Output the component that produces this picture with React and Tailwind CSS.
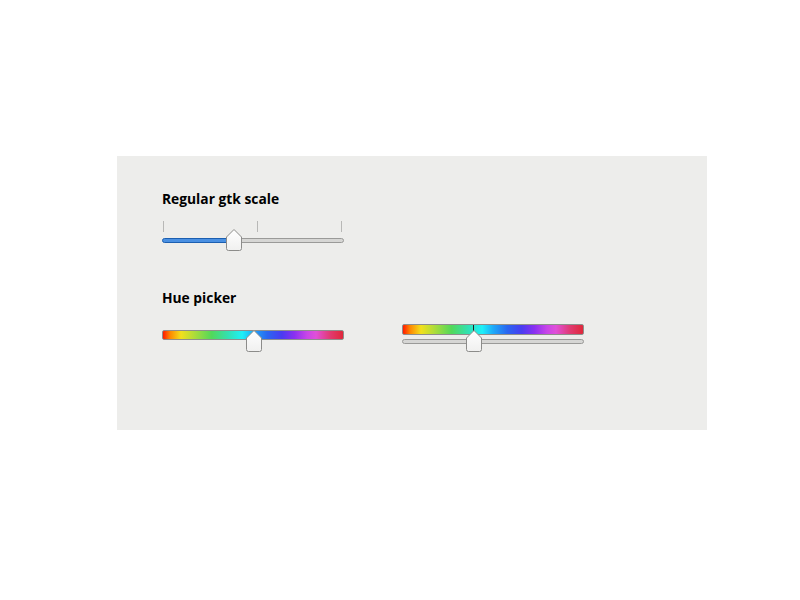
const hue =
  "bg-[linear-gradient(to_right,#ff1a00,#ff8800_4%,#f2e01c_10%,#a8dc3c_18%,#52d85a_27%,#33e0b0_36%,#1ef0f8_44%,#1eaaf8_50%,#2a66f0_58%,#4a3cf0_66%,#8a30f0_73%,#c846e8_80%,#e050d8_85%,#e03a70_93%,#e0283a)]";

function Knob() {
  return (
    <svg width="16" height="22" viewBox="0 0 16 22">
      <defs>
        <linearGradient id="kg" x1="0" y1="0" x2="0" y2="1">
          <stop offset="0" stopColor="#ffffff" />
          <stop offset="1" stopColor="#f0f0ef" />
        </linearGradient>
      </defs>
      <path
        d="M8 0.5 L15.5 8 L15.5 19.5 Q15.5 21.5 13.5 21.5 L2.5 21.5 Q0.5 21.5 0.5 19.5 L0.5 8 Z"
        fill="url(#kg)"
        stroke="#8c8c8a"
      />
    </svg>
  );
}

export default function App() {
  return (
    <div className="w-[800px] h-[600px] bg-white pt-[156px] pl-[117px] font-['Open_Sans',sans-serif]">
      <div className="w-[590px] h-[274px] bg-[#ededeb] pl-[45px] pt-[35px]">
        <h2 className="text-[13.8px] font-bold text-black leading-[16px]">Regular gtk scale</h2>

        {/* regular scale */}
        <div className="w-[182px] mt-[14px]">
          <div className="flex h-[11px] pl-[1px]">
            <div className="w-px h-full bg-[#b8b8b6]" />
            <div className="w-px h-full bg-[#b8b8b6] ml-[93px]" />
            <div className="w-px h-full bg-[#b8b8b6] ml-[83px]" />
          </div>
          <div className="relative h-[22px] mt-[-3px] flex items-center">
            <div className="flex w-full h-[5px]">
              <div className="w-[72px] h-full rounded-l-full border border-[#1c5fb0] bg-[#4a90e2]" />
              <div className="flex-1 h-full rounded-r-full border border-[#9a9a98] bg-[#d6d6d4]" />
            </div>
            <div className="absolute left-[64px] top-0">
              <Knob />
            </div>
          </div>
        </div>

        <h2 className="text-[13.8px] font-bold text-black leading-[16px] mt-[39px]">Hue picker</h2>

        <div className="flex items-start gap-[58px] mt-[14px]">
          {/* hue picker 1 */}
          <div className="relative w-[182px] h-[22px] mt-[10px]">
            <div className={`w-full h-[10px] rounded-[2px] border border-[#8e8e8c] ${hue}`} />
            <div className="absolute left-[84px] top-0">
              <Knob />
            </div>
          </div>

          {/* hue picker 2 */}
          <div className="w-[182px] mt-[4px]">
            <div className={`relative w-full h-[11px] rounded-[2px] border border-[#8e8e8c] ${hue}`}>
              <div className="absolute left-[70px] top-0 w-px h-full bg-[#202020]" />
            </div>
            <div className="relative h-[22px] mt-[-5px] flex items-center">
              <div className="w-full h-[5px] rounded-full border border-[#9a9a98] bg-[#d6d6d4]" />
              <div className="absolute left-[64px] top-0">
                <Knob />
              </div>
            </div>
          </div>
        </div>
      </div>
    </div>
  );
}
